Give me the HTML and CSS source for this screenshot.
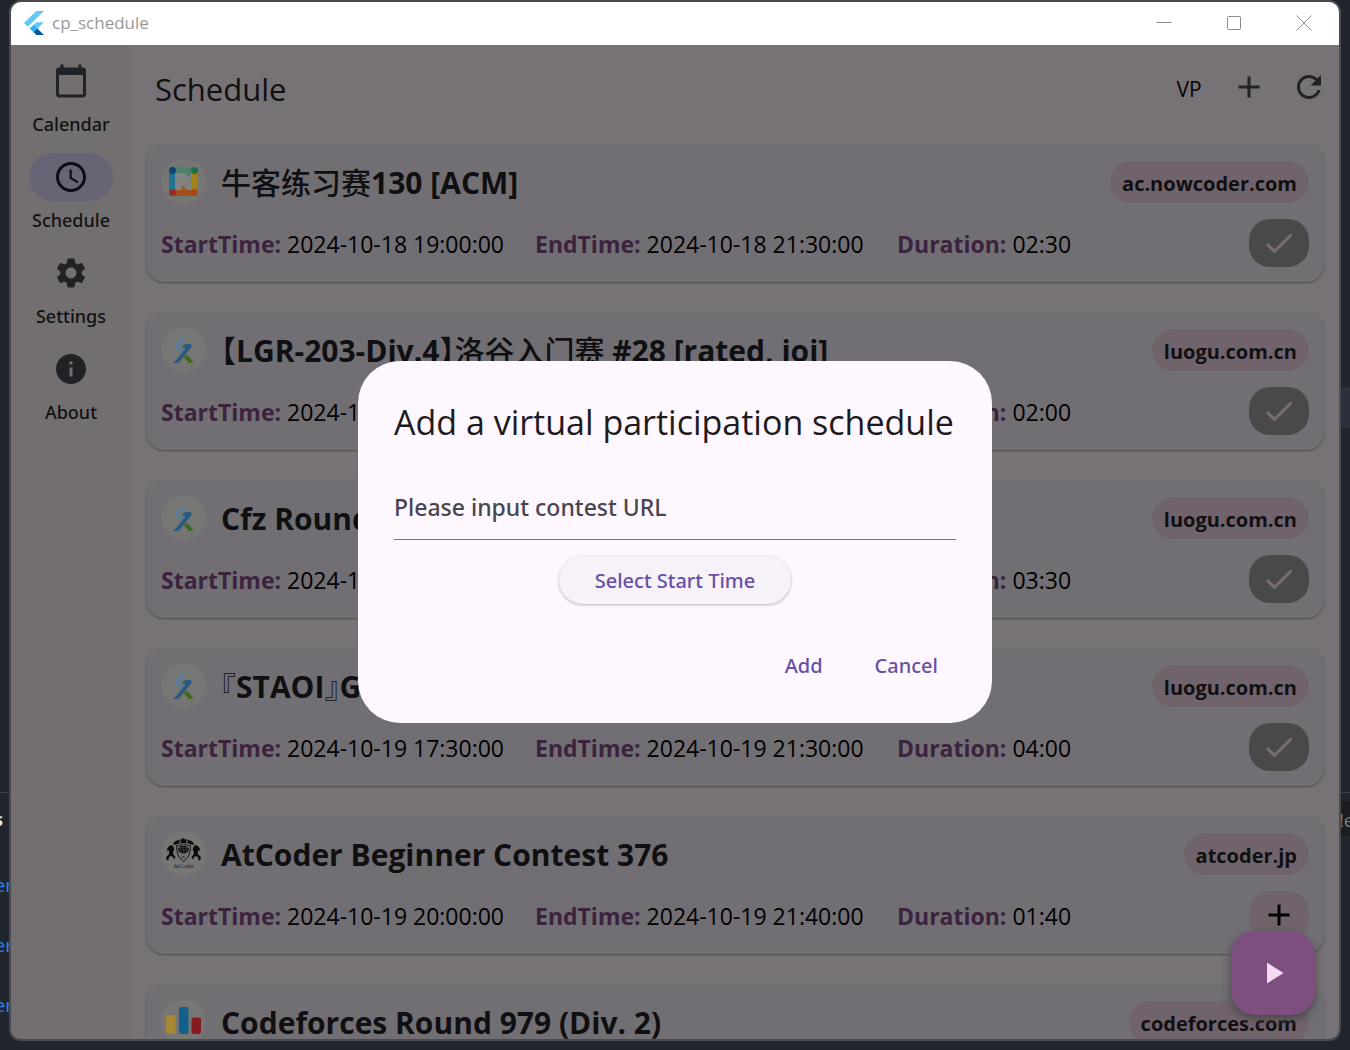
FILE: index.html
```html
<!DOCTYPE html>
<html lang="en">
<head>
<meta charset="utf-8">
<title>cp_schedule</title>
<link rel="stylesheet" href="styles.css">
</head>
<body>
<svg class="defs" aria-hidden="true">
  <symbol id="check" viewBox="0 0 24 24"><path d="M9 16.17 4.83 12l-1.42 1.41L9 19 21 7l-1.41-1.41z"/></symbol>
  <symbol id="plus" viewBox="0 0 24 24"><path d="M19 13h-6v6h-2v-6H5v-2h6V5h2v6h6v2z"/></symbol>
  <symbol id="luogu" viewBox="0 0 45 45">
    <path d="M22.500 11.500 L16.500 17.500 Q15.500 19.500 17 21 L20.500 24" fill="none" stroke="#5f7d9a" stroke-width="3.500" stroke-linecap="round" stroke-linejoin="round"/>
    <path d="M20.500 20.500 L24 17 L29.500 17 Q31.500 19 29.500 21.500 L17.500 36 L12.500 36 L24.500 21.500 Z" fill="#2b5a7e"/>
    <path d="M22.500 30.500 L25.500 27.500 Q29 30 32.500 36 L27.500 36 Q26 33 22.500 30.500 Z" fill="#3f6c25"/>
  </symbol>
</svg>

<div class="desktop" aria-hidden="true">
  <i class="mark mark-grey"></i><i class="mark mark-cyan"></i>
  <i class="rule"></i><i class="band"></i>
  <span class="code code-s">s</span>
  <span class="code code-er er-1">er</span>
  <span class="code code-er er-2">er</span>
  <span class="code code-er er-3">er</span>
  <span class="code code-tip">!e</span>
</div>

<div class="window">
  <header class="titlebar">
    <svg class="flutter" viewBox="0 0 20 24">
      <path d="M12.300 0 L0 12 L3.800 15.700 L20 0 Z" fill="#5fc9f8"/>
      <path d="M12.300 11.200 L5.900 17.500 L9.700 21.200 L20 11.200 Z" fill="#5fc9f8"/>
      <path d="M5.900 17.500 L9.600 13.900 L13.300 17.500 L9.600 21.200 Z" fill="#35b1ef"/>
      <path d="M9.600 21.200 L13.300 17.500 L20 24 L12.400 24 Z" fill="#08589c"/>
    </svg>
    <span class="app-name">cp_schedule</span>
    <button class="win-btn" aria-label="Minimize"><svg viewBox="0 0 16 16"><path d="M0.500 7.500h15"/></svg></button>
    <button class="win-btn" aria-label="Maximize"><svg viewBox="0 0 16 16"><rect x="1.500" y="1.500" width="13" height="13" rx="1"/></svg></button>
    <button class="win-btn" aria-label="Close"><svg viewBox="0 0 16 16"><path d="M.500.500l15 15M15.500.500l-15 15"/></svg></button>
  </header>

  <div class="content">
    <nav class="rail">
      <a href="#calendar" class="dest"><span class="ind"><svg viewBox="0 0 24 24"><path d="M20 3h-1V1h-2v2H7V1H5v2H4c-1.100 0-2 .900-2 2v16c0 1.100.900 2 2 2h16c1.100 0 2-.900 2-2V5c0-1.100-.900-2-2-2zm0 18H4V8h16v13z"/></svg></span>Calendar</a>
      <a href="#schedule" class="dest active" aria-current="page"><span class="ind"><svg viewBox="0 0 24 24"><path d="M11.990 2C6.470 2 2 6.480 2 12s4.470 10 9.990 10C17.520 22 22 17.520 22 12S17.520 2 11.990 2zM12 20c-4.420 0-8-3.580-8-8s3.580-8 8-8 8 3.580 8 8-3.580 8-8 8zm.500-13H11v6l5.250 3.150.750-1.230-4.500-2.670z"/></svg></span>Schedule</a>
      <a href="#settings" class="dest"><span class="ind"><svg viewBox="0 0 24 24"><path d="M19.140 12.940c.040-.300.060-.610.060-.940 0-.320-.020-.640-.070-.940l2.030-1.580c.180-.140.230-.410.120-.610l-1.920-3.320c-.120-.220-.370-.290-.590-.220l-2.390.960c-.500-.380-1.030-.700-1.620-.940l-.360-2.540c-.040-.240-.240-.410-.480-.410h-3.840c-.240 0-.430.170-.470.410l-.360 2.540c-.590.240-1.130.570-1.620.940l-2.390-.960c-.220-.080-.470 0-.590.220L2.740 8.870c-.120.210-.080.470.120.610l2.030 1.580c-.050.300-.090.630-.090.940s.020.640.070.940l-2.030 1.580c-.180.140-.230.410-.120.610l1.920 3.320c.120.220.370.290.590.220l2.390-.960c.500.380 1.030.700 1.620.940l.360 2.540c.050.240.240.410.480.410h3.840c.240 0 .440-.170.470-.410l.360-2.540c.590-.240 1.130-.560 1.620-.940l2.390.960c.220.080.470 0 .590-.220l1.920-3.320c.120-.220.070-.470-.120-.610l-2.010-1.580zM12 15.600c-1.980 0-3.600-1.620-3.600-3.600s1.620-3.600 3.600-3.600 3.600 1.620 3.600 3.600-1.620 3.600-3.600 3.600z"/></svg></span>Settings</a>
      <a href="#about" class="dest"><span class="ind"><svg viewBox="0 0 24 24"><path d="M12 2C6.480 2 2 6.480 2 12s4.480 10 10 10 10-4.480 10-10S17.520 2 12 2zm1 15h-2v-6h2v6zm0-8h-2V7h2v2z"/></svg></span>About</a>
    </nav>

    <main class="page">
      <header class="appbar">
        <h1>Schedule</h1>
        <button class="tool vp">VP</button>
        <button class="tool" aria-label="Add"><svg><use href="#plus"/></svg></button>
        <button class="tool" aria-label="Refresh"><svg viewBox="0 0 24 24"><path d="M17.650 6.350C16.200 4.900 14.210 4 12 4c-4.420 0-7.990 3.580-7.990 8s3.570 8 7.990 8c3.730 0 6.840-2.550 7.730-6h-2.080c-.820 2.330-3.040 4-5.650 4-3.310 0-6-2.690-6-6s2.690-6 6-6c1.660 0 3.140.690 4.220 1.780L13 11h7V4l-2.350 2.350z"/></svg></button>
      </header>

      <div class="list">
        <article class="card">
          <div class="top">
            <span class="avatar"><svg viewBox="0 0 45 45">
              <path d="M12 12h21v21H12z" fill="#828282"/>
              <path d="M8 11h6v23H8z" fill="#207490"/>
              <path d="M31 11h6v23h-6z" fill="#a08218"/>
              <path d="M11 8h23v6h-5v5l-5-5H11z" fill="#4a826a"/>
              <path d="M11 37h23v-6h-8l-5-5v5H11z" fill="#a0521e"/>
              <circle cx="11.500" cy="11.500" r="3.500" fill="#0c4674"/><circle cx="33.500" cy="11.500" r="3.500" fill="#1c7044"/>
              <circle cx="11.500" cy="33.500" r="3.500" fill="#9c2c20"/><circle cx="33.500" cy="33.500" r="3.500" fill="#a5461e"/>
            </svg></span>
            <h2><span class="han">牛客练习赛</span>130 [ACM]</h2><span class="host">ac.nowcoder.com</span>
          </div>
          <div class="bottom">
            <div class="times"><span><b>StartTime:</b> 2024-10-18 19:00:00</span><span><b>EndTime:</b> 2024-10-18 21:30:00</span><span><b>Duration:</b> 02:30</span></div>
            <button class="mark-btn done" aria-label="Added"><svg><use href="#check"/></svg></button>
          </div>
        </article>

        <article class="card">
          <div class="top">
            <span class="avatar"><svg><use href="#luogu"/></svg></span>
            <h2><span class="half">【</span>LGR-203-Div.4<span class="half">】</span><span class="han">洛谷入门赛</span> #28 [rated, ioi]</h2><span class="host">luogu.com.cn</span>
          </div>
          <div class="bottom">
            <div class="times"><span><b>StartTime:</b> 2024-10-19 10:00:00</span><span><b>EndTime:</b> 2024-10-19 12:00:00</span><span><b>Duration:</b> 02:00</span></div>
            <button class="mark-btn done" aria-label="Added"><svg><use href="#check"/></svg></button>
          </div>
        </article>

        <article class="card">
          <div class="top">
            <span class="avatar"><svg><use href="#luogu"/></svg></span>
            <h2>Cfz Round</h2><span class="host">luogu.com.cn</span>
          </div>
          <div class="bottom">
            <div class="times"><span><b>StartTime:</b> 2024-10-19 14:00:00</span><span><b>EndTime:</b> 2024-10-19 17:30:00</span><span><b>Duration:</b> 03:30</span></div>
            <button class="mark-btn done" aria-label="Added"><svg><use href="#check"/></svg></button>
          </div>
        </article>

        <article class="card">
          <div class="top">
            <span class="avatar"><svg><use href="#luogu"/></svg></span>
            <h2><span class="half thin">『</span>STAOI<span class="half thin">』</span>G</h2><span class="host">luogu.com.cn</span>
          </div>
          <div class="bottom">
            <div class="times"><span><b>StartTime:</b> 2024-10-19 17:30:00</span><span><b>EndTime:</b> 2024-10-19 21:30:00</span><span><b>Duration:</b> 04:00</span></div>
            <button class="mark-btn done" aria-label="Added"><svg><use href="#check"/></svg></button>
          </div>
        </article>

        <article class="card">
          <div class="top">
            <span class="avatar"><svg viewBox="0 0 45 45">
              <g fill="#0b0b0c">
                <path d="M22.500 6.500l1.200 2 2.300-.5-.8 2.500 1 1.500h-7.400l1-1.500-.8-2.500 2.300.5z"/>
                <path d="M12 13q2-4 7-4l-1 2 1 1.500q-3-.5-5 1.500zM33 13q-2-4-7-4l1 2-1 1.500q3-.5 5 1.500z"/>
                <path d="M6 18q1.500-3.500 5-4l1.500 2q1 1 .5 3.500l-1 1 .5 3 2 2.500-1.500 2.500-1-2.500-2.500-1-2 2 .3 2.300H5.500l-.3-3.300 3-3-.2-4-1.300 1.500z"/>
                <path d="M39 18q-1.500-3.500-5-4l-1.500 2q-1 1-.5 3.500l1 1-.5 3-2 2.500 1.500 2.500 1-2.500 2.500-1 2 2-.3 2.300h2.300l.3-3.300-3-3 .2-4 1.300 1.500z"/>
                <ellipse cx="22.500" cy="18.500" rx="5.500" ry="4"/>
              </g>
              <path d="M15.500 14.500q4 0 7-2 3 2 7 2 .5 11-7 16-7.500-5-7-16z" fill="none" stroke="#161617" stroke-width="1"/>
              <path d="M17 18.500h11M22.500 14.500v8M19.500 15v7M25.500 15v7M18 16.500h9M18 20.500h9" stroke="#48484a" stroke-width=".5"/>
              <path d="M21 24.500l3 3M24 24.500l-3 3" stroke="#2a2a2b" stroke-width="1"/>
              <text x="22.500" y="37" class="crest-name">AtCoder</text>
            </svg></span>
            <h2>AtCoder Beginner Contest 376</h2><span class="host">atcoder.jp</span>
          </div>
          <div class="bottom">
            <div class="times"><span><b>StartTime:</b> 2024-10-19 20:00:00</span><span><b>EndTime:</b> 2024-10-19 21:40:00</span><span><b>Duration:</b> 01:40</span></div>
            <button class="mark-btn" aria-label="Add to schedule"><svg><use href="#plus"/></svg></button>
          </div>
        </article>

        <article class="card">
          <div class="top">
            <span class="avatar"><svg viewBox="0 0 45 45">
              <rect x="5" y="16" width="9.500" height="19" rx="2" fill="#a78732"/>
              <rect x="18" y="8" width="9.500" height="27" rx="2" fill="#14608c"/>
              <rect x="30.500" y="18.500" width="9.500" height="16.500" rx="2" fill="#861a20"/>
            </svg></span>
            <h2>Codeforces Round 979 (Div. 2)</h2><span class="host">codeforces.com</span>
          </div>
          <div class="bottom">
            <div class="times"></div>
          </div>
        </article>
      </div>
    </main>

    <button class="fab" aria-label="Start"><svg viewBox="0 0 24 24"><path d="M8 5v14l11-7z"/></svg></button>

    <div class="overlay">
      <section class="dialog" role="dialog" aria-modal="true" aria-labelledby="dlg-title">
        <h2 id="dlg-title">Add a virtual participation schedule</h2>
        <input type="url" placeholder="Please input contest URL" aria-label="Please input contest URL">
        <button class="select-time">Select Start Time</button>
        <div class="actions"><button>Add</button><button>Cancel</button></div>
      </section>
    </div>
  </div>
</div>
</body>
</html>
```
FILE: styles.css
```css
* { box-sizing: border-box; }
body {
  margin: 0;
  height: 100vh;
  padding: 0 9px 9px;
  overflow: hidden;
  background: #21252e;
  font-family: "Open Sans", "Noto Sans CJK SC", sans-serif;
  color: #101012;
}
h1, h2 { margin: 0; font-weight: 400; }
button { border: 0; padding: 0; background: none; color: inherit; font: inherit; }
svg { display: block; fill: currentColor; }
.defs { position: absolute; width: 0; height: 0; }

/* what shows of the desktop around the window */
.desktop { position: absolute; inset: 0; overflow: hidden; }
.mark { position: absolute; top: 0; width: 2px; height: 2px; }
.mark-grey { left: 52px; background: #5a5d63; }
.mark-cyan { left: 93px; background: #4fb3c4; }
.rule { position: absolute; top: 792px; left: 0; right: 0; height: 1px; background: #3a3e47; }
.band { position: absolute; top: 387px; right: 0; width: 12px; height: 41px; background: #2b303c; }
.code { position: absolute; font: 18px/24px "Noto Sans", sans-serif; }
.code-s { left: -6px; top: 807px; color: #e6f2ee; font-weight: 700; }
.code-er { left: -5px; color: #2e82e6; }
.er-1 { top: 873px; }
.er-2 { top: 933px; }
.er-3 { top: 993px; }
.code-tip { right: -4px; top: 801px; height: 35px; padding: 0 0 0 4px; line-height: 39px; background: #1b1d20; color: #75787c; }

.window {
  position: relative;
  height: 100%;
  display: flex;
  flex-direction: column;
  border: 2px solid #4a4b50;
  border-radius: 12px;
  background: #777275;
  overflow: hidden;
}
.titlebar { display: flex; align-items: center; height: 43px; flex: none; padding: 0 0 2px 13px; background: #fff; color: #999; }
.flutter { width: 20px; height: 24px; margin-right: 8px; }
.app-name { flex: 1; font-size: 17px; line-height: 24px; }
.win-btn { width: 70px; height: 40px; display: grid; place-items: center; }
.win-btn svg { width: 16px; height: 16px; fill: none; stroke: #8c8c8c; stroke-width: 1; }

.content { position: relative; flex: 1; min-height: 0; display: flex; }
.rail { width: 120px; flex: none; display: flex; flex-direction: column; align-items: center; gap: 16px; padding-top: 12px; background: #736f70; }
.dest { display: flex; flex-direction: column; align-items: center; gap: 6px; color: #111113; text-decoration: none; font: 500 18px/26px "Noto Sans", sans-serif; }
.ind { width: 84px; height: 48px; border-radius: 24px; display: grid; place-items: center; color: #222125; }
.ind svg, .tool svg, .mark-btn svg, .fab svg { width: 36px; height: 36px; }
.active .ind { background: #686475; color: #0f0a1a; }

.page { flex: 1; min-width: 0; overflow: hidden; }
.appbar { display: flex; align-items: center; height: 84px; padding-left: 24px; }
.appbar h1 { flex: 1; padding-top: 3px; font-size: 31px; line-height: 42px; }
.tool { width: 60px; height: 60px; display: grid; place-items: center; color: #222125; }
.vp { padding-top: 3px; font-size: 21px; color: #050506; }

.list { display: flex; flex-direction: column; gap: 30px; padding: 15px; }
.card { display: flex; flex-direction: column; gap: 15px; padding: 15px; border-radius: 18px; background: #716f74; box-shadow: 0 1px 2px #4d4b4e; }
.top { display: flex; align-items: center; height: 45px; }
.avatar { width: 45px; height: 45px; flex: none; margin-right: 15px; border-radius: 50%; background: #767775; }
.avatar svg { width: 45px; height: 45px; }
.crest-name { font: 6px "Liberation Serif", serif; text-anchor: middle; fill: #1c1c1d; }
.top h2 { flex: 1; min-width: 0; padding-top: 3px; font-size: 30px; line-height: 42px; font-weight: 700; white-space: nowrap; }
.han { font-weight: 500; }
.half { font-feature-settings: "halt"; }
.thin { font-weight: 300; }
.host { height: 42px; padding: 3px 12px 0; border-radius: 21px; background: #70636c; font-size: 20px; line-height: 39px; font-weight: 700; }
.bottom { display: flex; align-items: center; height: 48px; }
.times { flex: 1; display: grid; grid-template-columns: 374px 362px auto; padding-top: 2px; font-size: 23px; line-height: 32px; color: #000; white-space: nowrap; }
.times b { color: #3b233e; }
.mark-btn { width: 60px; height: 48px; display: grid; place-items: center; border-radius: 21px; background: #70636c; color: #000; }
.done { background: #484948; color: #7b6d78; }

.fab { position: absolute; right: 24px; bottom: 24px; width: 84px; height: 84px; display: grid; place-items: center; border-radius: 24px; background: #7c4f7e; color: #f6daf2; box-shadow: 0 4px 9px #4a474a; }

.overlay { position: absolute; inset: 0; display: grid; place-items: center; }
.dialog { display: flex; flex-direction: column; width: 634px; max-width: 90%; padding: 36px 36px 34px; border-radius: 42px; background: #fef7ff; color: #1d1b20; }
.dialog h2 { padding-top: 1px; font-size: 34px; line-height: 48px; white-space: nowrap; }
.dialog input { width: 100%; height: 71px; margin-top: 23px; padding: 6px 0 0; border: 0; border-bottom: 1px solid #79747e; border-radius: 0; background: none; outline: 0; font: 500 23px/32px "Noto Sans", sans-serif; color: #1d1b20; }
.dialog input::placeholder { color: #49454f; opacity: 1; }
.dialog button { height: 48px; padding-top: 2px; border-radius: 24px; color: #6750a4; font: 500 20px/28px "Noto Sans", sans-serif; }
.dialog .select-time { align-self: center; margin-top: 16px; padding: 2px 36px 0; background: #f7f2fa; box-shadow: 0 1px 3px #b5b0b8; }
.actions { display: flex; justify-content: flex-end; gap: 16px; margin-top: 37px; }
.actions button { padding: 2px 18px 0; }
```
